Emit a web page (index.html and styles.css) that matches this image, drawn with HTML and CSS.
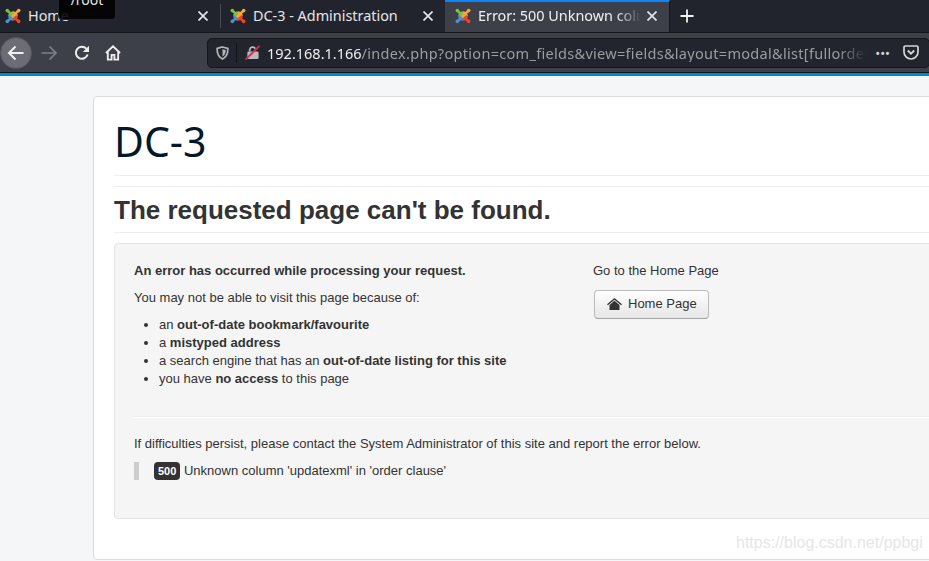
FILE: index.html
```html
<!DOCTYPE html>
<html lang="en">
<head>
    <meta charset="UTF-8">
    <meta name="viewport" content="width=device-width, initial-scale=1.0">
    <title>Error: 500 Unknown column</title>
    <link rel="stylesheet" href="styles.css">
</head>
<body>
    <svg class="defs" width="0" height="0">
        <symbol id="joomla" viewBox="0 0 16 16">
            <g fill="none" stroke-width="2.500">
                <path d="M8 3.800L3.800 8M2.800 2.800L9.500 9.500" stroke="#7ac143"/>
                <path d="M8 3.800L12.200 8M13.200 2.800L6.500 9.500" stroke="#f9a541"/>
                <path d="M8 12.200L3.800 8M2.800 13.200L6.500 9.500" stroke="#5091cd"/>
                <path d="M8 12.200L12.200 8M13.200 13.200L9.500 9.500" stroke="#f44321"/>
            </g>
            <circle cx="2.300" cy="2.600" r="1.800" fill="#7ac143"/>
            <circle cx="13.700" cy="2.600" r="1.800" fill="#f9a541"/>
            <circle cx="2.300" cy="13.400" r="1.800" fill="#5091cd"/>
            <circle cx="13.700" cy="13.400" r="1.800" fill="#f44321"/>
        </symbol>
        <symbol id="close" viewBox="0 0 10 10">
            <path d="M0.500 0.500L9.500 9.500M9.500 0.500L0.500 9.500" fill="none" stroke="#e4e5e8" stroke-width="1.700"/>
        </symbol>
    </svg>

    <header class="browser">
        <div class="tabbar">
            <div class="tab tab-first">
                <svg class="favicon"><use href="#joomla"/></svg>
                <span class="tab-title">Home</span>
                <svg class="tab-close"><use href="#close"/></svg>
            </div>
            <div class="tab tab-sep">
                <svg class="favicon"><use href="#joomla"/></svg>
                <span class="tab-title">DC-3 - Administration</span>
                <svg class="tab-close"><use href="#close"/></svg>
            </div>
            <div class="tab tab-active">
                <svg class="favicon"><use href="#joomla"/></svg>
                <span class="tab-title tab-fade">Error: 500 Unknown colu</span>
                <svg class="tab-close"><use href="#close"/></svg>
            </div>
            <svg class="new-tab" width="16" height="16" viewBox="0 0 16 16"><path d="M8 1.500V14.500M1.500 8H14.500" stroke="#f2f2f4" stroke-width="1.800" fill="none"/></svg>
        </div>
        <div class="tooltip">/root</div>
        <div class="toolbar">
            <div class="nav-buttons">
                <span class="back">
                    <svg width="20" height="20" viewBox="0 0 20 20"><path d="M17.500 10H3M9.500 3.500L3 10l6.500 6.500" fill="none" stroke="#f0f0f2" stroke-width="2"/></svg>
                </span>
                <svg class="forward" width="16" height="16" viewBox="0 0 16 16"><path d="M0.500 8H15M8.500 1.500L15 8 8.500 14.500" fill="none" stroke="#7f8086" stroke-width="1.600"/></svg>
                <svg class="reload" width="16" height="16" viewBox="0 0 16 16"><path d="M13.600 9.500A6 6 0 1 1 12.300 3.700" fill="none" stroke="#eeeef0" stroke-width="2"/><path d="M15 0.800V7H8.800z" fill="#eeeef0"/></svg>
                <svg class="home" width="16" height="16" viewBox="0 0 17 17"><path d="M1 8.500L8.500 1.500 16 8.500M3 7.500V15.500H7V10.500H10V15.500H14V7.500" fill="none" stroke="#eeeef0" stroke-width="2"/></svg>
            </div>
            <div class="urlbar">
                <svg class="shield" width="13" height="14" viewBox="0 0 14 15"><path d="M7 1L12.800 2.500C13 8 11 12 7 14 3 12 1 8 1.200 2.500z" fill="none" stroke="#b4b5b9" stroke-width="1.800"/><path d="M7 3.500L10.500 4.300C10.500 7.500 9.500 10 7 11.500z" fill="#b4b5b9"/></svg>
                <span class="url-sep"></span>
                <svg class="lock" width="15" height="15" viewBox="0 0 16 16"><path d="M5 7V5a3.200 3.200 0 0 1 6 -1" fill="none" stroke="#b9babd" stroke-width="1.800"/><rect x="2.500" y="7" width="12" height="8" rx="1.500" fill="#b9babd"/><path d="M0.500 15.500L15.500 1" stroke="#e22850" stroke-width="2"/></svg>
                <div class="url"><span class="url-host">192.168.1.166</span><span class="url-path">/index.php?option=com_fields&amp;view=fields&amp;layout=modal&amp;list[fullorder</span></div>
                <span class="dots">•••</span>
                <svg class="pocket" width="16" height="15" viewBox="0 0 16 15"><path d="M1 2.200C1 1.500 1.500 1 2.200 1H13.800C14.500 1 15 1.500 15 2.200V7A7 7 0 0 1 1 7z" fill="none" stroke="#d5d5d8" stroke-width="1.700"/><path d="M4.800 5.500L8 8.600 11.200 5.500" fill="none" stroke="#d5d5d8" stroke-width="1.900"/></svg>
            </div>
        </div>
    </header>
    <div class="blue-strip"></div>

    <main class="page">
        <div class="card">
            <h1 class="site-title">DC-3</h1>
            <hr class="rule rule-title">
            <h2 class="page-title">The requested page can't be found.</h2>
            <div class="well">
                <div class="well-columns">
                    <div class="col-left">
                        <p class="lead"><strong>An error has occurred while processing your request.</strong></p>
                        <p>You may not be able to visit this page because of:</p>
                        <ul>
                            <li>an <strong>out-of-date bookmark/favourite</strong></li>
                            <li>a <strong>mistyped address</strong></li>
                            <li>a search engine that has an <strong>out-of-date listing for this site</strong></li>
                            <li>you have <strong>no access</strong> to this page</li>
                        </ul>
                    </div>
                    <div class="col-right">
                        <p>Go to the Home Page</p>
                        <a class="btn">
                            <svg width="15" height="12" viewBox="0 0 15 12"><path d="M7.500 0L0 6.200 1 7.200 7.500 1.800 14 7.200 15 6.200z" fill="#333"/><path d="M2.500 7L7.500 2.800 12.500 7V12H2.500z" fill="#333"/></svg>
                            Home Page
                        </a>
                    </div>
                </div>
                <hr class="rule rule-well">
                <p>If difficulties persist, please contact the System Administrator of this site and report the error below.</p>
                <blockquote class="error-quote">
                    <span class="badge">500</span> Unknown column 'updatexml' in 'order clause'
                </blockquote>
            </div>
        </div>
    </main>
    <div class="watermark">https://blog.csdn.net/ppbgi</div>
</body>
</html>
```

FILE: styles.css
```css
html, body {
    margin: 0;
    height: 561px;
    overflow: hidden;
}
body {
    position: relative;
    font-family: "Liberation Sans", Arial, sans-serif;
    font-size: 13px;
    line-height: 18px;
    color: #333;
    background-color: #f4f6f7;
}
.defs {
    position: absolute;
}

/* browser chrome */
.browser {
    position: relative;
    font-family: "Noto Sans", sans-serif;
}
.tabbar {
    display: flex;
    align-items: center;
    height: 32px;
    background-color: #22242d;
    overflow: hidden;
}
.tab {
    display: flex;
    align-items: center;
    flex: none;
    box-sizing: border-box;
    width: 225px;
    height: 32px;
    padding: 0 12px 0 10px;
    font-size: 14.400px;
    color: #e4e5e8;
}
.tab-first {
    width: 220px;
    padding-left: 5px;
}
.tab-sep {
    border-left: 1px solid #4a4b53;
    background-clip: padding-box;
    padding-left: 9px;
    height: 24px;
}
.tab-active {
    padding: 0 12px 2px 10px;
    background-color: #3e4049;
    border-top: 2px solid #0a84ff;
    border-right: 1px solid #15161b;
    color: #f0f0f2;
}
.favicon {
    flex: none;
    width: 16px;
    height: 16px;
    margin-right: 7px;
}
.tab-title {
    flex: 1;
    white-space: nowrap;
    overflow: hidden;
}
.tab-fade {
    -webkit-mask-image: linear-gradient(to right, #000 85%, transparent 100%);
    mask-image: linear-gradient(to right, #000 85%, transparent 100%);
}
.tab-close {
    flex: none;
    width: 10px;
    height: 10px;
    margin-left: 6px;
}
.new-tab {
    margin-left: 9px;
}
.tooltip {
    position: absolute;
    left: 58px;
    top: -8px;
    width: 58px;
    height: 28px;
    box-sizing: border-box;
    background-color: rgba(0, 0, 0, 0.88);
    border: 1px solid #26272c;
    border-radius: 4px;
    color: #e6e6e6;
    font-size: 14px;
    line-height: 13px;
    text-align: center;
}
.toolbar {
    display: flex;
    align-items: center;
    height: 40px;
    background-color: #3e4049;
    border-top: 1px solid #15161b;
    box-sizing: border-box;
}
.nav-buttons {
    display: flex;
    align-items: center;
    width: 207px;
    flex: none;
}
.back {
    display: flex;
    align-items: center;
    justify-content: center;
    width: 32px;
    height: 32px;
    border-radius: 50%;
    background-color: #6c6d74;
    border: 1px solid #55565d;
    box-sizing: border-box;
}
.forward {
    margin-left: 9px;
}
.reload {
    margin-left: 17px;
}
.home {
    margin-left: 15px;
}
.urlbar {
    flex: 1;
    display: flex;
    align-items: center;
    height: 30px;
    box-sizing: border-box;
    padding: 0 10px 0 8px;
    background-color: #23252e;
    border: 1px solid #15161b;
    border-radius: 5px;
    margin-right: -1px;
    min-width: 0;
}
.url-sep {
    flex: none;
    width: 1px;
    height: 20px;
    margin: 0 8px 0 7px;
    background-color: #111216;
}
.lock {
    flex: none;
    margin-right: 7px;
}
.url {
    flex: 1;
    min-width: 0;
    font-size: 14.500px;
    color: #9c9da1;
    white-space: nowrap;
    overflow: hidden;
    -webkit-mask-image: linear-gradient(to right, #000 95%, transparent 100%);
    mask-image: linear-gradient(to right, #000 95%, transparent 100%);
}
.url-host {
    color: #f0f0f2;
}
.url-path {
    letter-spacing: 0.300px;
}
.dots {
    flex: none;
    margin: 0 13px 0 8px;
    font-size: 13px;
    color: #d5d5d8;
}
.pocket {
    flex: none;
}
.blue-strip {
    height: 4px;
    background-color: #0088cc;
    border-top: 1px solid #15161b;
    box-sizing: border-box;
}

/* joomla error page */
.page {
    padding: 20px 0 0 93px;
}
.card {
    width: 900px;
    height: 464px;
    box-sizing: border-box;
    padding: 20px;
    background-color: #fff;
    border: 1px solid #dcdcdc;
    border-radius: 4px;
}
.site-title {
    margin: 0;
    font-family: "Noto Sans", sans-serif;
    font-size: 41px;
    line-height: 48px;
    font-weight: 400;
    color: #03192a;
}
.rule {
    margin: 0;
    border: 0;
    border-top: 1px solid #eee;
}
.rule-title {
    margin-top: 10px;
}
.page-title {
    margin: 10px 0 10px;
    padding: 9px 0 8px;
    border-top: 1px solid #eee;
    border-bottom: 1px solid #eee;
    font-size: 26px;
    line-height: 28px;
    font-weight: 700;
    color: #333;
}
.well {
    box-sizing: border-box;
    height: 276px;
    padding: 18px 19px 19px;
    background-color: #f5f5f5;
    border: 1px solid #e3e3e3;
    border-radius: 4px;
}
.well p {
    margin: 0 0 9px;
}
.well .col-right p {
    margin-bottom: 10px;
}
.well-columns {
    display: flex;
}
.col-left {
    width: 459px;
    flex: none;
}
.well ul {
    margin: 0 0 9px;
    padding: 0 0 0 25px;
}
.rule-well {
    margin: 19px 0 17px;
    border-top-color: #eee;
    border-bottom: 1px solid #fff;
}
.btn {
    display: inline-flex;
    align-items: center;
    gap: 6px;
    box-sizing: border-box;
    width: 115px;
    height: 29px;
    margin-left: 1px;
    padding: 0 0 2px 12px;
    white-space: nowrap;
    color: #333;
    background-image: linear-gradient(to bottom, #fff, #e6e6e6);
    border: 1px solid #bbb;
    border-bottom-color: #a2a2a2;
    border-radius: 4px;
}
.error-quote {
    margin: 0;
    padding: 0 0 0 15px;
    border-left: 5px solid #ccc;
    line-height: 18px;
}
.badge {
    display: inline-block;
    padding: 0 4px;
    border-radius: 4px;
    background-color: #333;
    color: #fff;
    font-size: 11px;
    font-weight: 700;
}
.watermark {
    position: absolute;
    left: 736px;
    top: 532px;
    font-size: 16px;
    line-height: 22px;
    color: #e6e6e6;
}
```
